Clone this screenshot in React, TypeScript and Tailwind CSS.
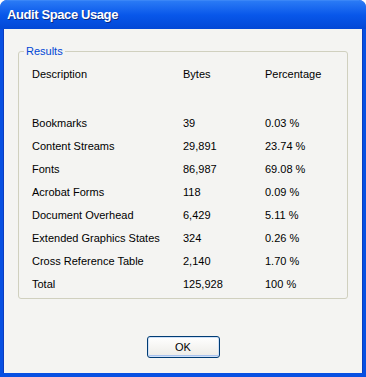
import React from 'react';

const rows: [string, string, string][] = [
  ['Bookmarks', '39', '0.03 %'],
  ['Content Streams', '29,891', '23.74 %'],
  ['Fonts', '86,987', '69.08 %'],
  ['Acrobat Forms', '118', '0.09 %'],
  ['Document Overhead', '6,429', '5.11 %'],
  ['Extended Graphics States', '324', '0.26 %'],
  ['Cross Reference Table', '2,140', '1.70 %'],
  ['Total', '125,928', '100 %'],
];

function Row({ cells }: { cells: [string, string, string] }) {
  return (
    <div className="flex h-[23px] items-center">
      <div className="w-[151px]">{cells[0]}</div>
      <div className="w-[82px]">{cells[1]}</div>
      <div>{cells[2]}</div>
    </div>
  );
}

export default function App() {
  return (
    <div className="w-[366px] h-[377px] flex flex-col rounded-t-[7px] bg-[#0750e2] font-['Liberation_Sans',Arial,sans-serif] text-[11px] text-black overflow-hidden">
      {/* title bar */}
      <div className="h-[29px] shrink-0 flex items-center px-[7px] rounded-t-[7px] bg-gradient-to-b from-[#2a7af5] via-[#0857ea] to-[#0348d6] border-t border-[#3a86f7]">
        <span className="text-white font-bold text-[13px] tracking-[-0.4px] [text-shadow:1px_1px_0_#0a2a80]">
          Audit Space Usage
        </span>
      </div>
      {/* client area */}
      <div className="flex-1 mx-[3px] mb-[4px] bg-[#f4f4f2] border-l border-r border-[#0a3cc0] flex flex-col">
        <div className="relative mt-[22px] ml-[14px] w-[330px] h-[248px] border border-[#d0d0bf] rounded-[3px]">
          <span className="absolute -top-[8px] left-[5px] px-[2px] bg-[#f4f4f2] text-[#0046d5] leading-[14px]">
            Results
          </span>
          <div className="pl-[13px] pt-[11px]">
            <Row cells={['Description', 'Bytes', 'Percentage']} />
            <div className="h-[26px]" />
            {rows.map((r) => (
              <Row key={r[0]} cells={r} />
            ))}
          </div>
        </div>
        <div className="flex justify-center mt-[37px]">
          <button className="w-[73px] h-[22px] rounded-[3px] border border-[#003c74] bg-gradient-to-b from-[#ffffff] to-[#ecebe6] shadow-[inset_0_0_0_1px_#cfe0f7,inset_0_-2px_0_#a8c2ee] text-[11px] text-black">
            OK
          </button>
        </div>
      </div>
    </div>
  );
}
